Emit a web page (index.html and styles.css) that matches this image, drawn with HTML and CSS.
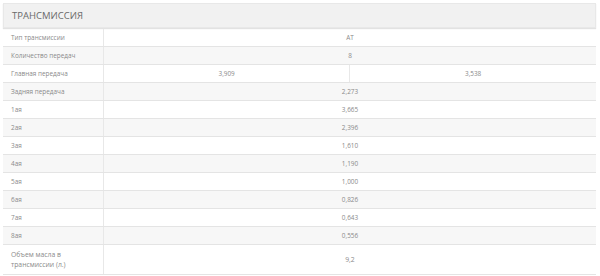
FILE: index.html
```html
<!DOCTYPE html>
<html lang="ru">
<head>
<meta charset="utf-8">
<link rel="stylesheet" href="styles.css">
</head>
<body>
<div class="panel">
  <div class="head">ТРАНСМИССИЯ</div>
  <table class="spec">
    <tr><td class="k">Тип трансмиссии</td><td class="v" colspan="2">AT</td></tr>
    <tr><td class="k">Количество передач</td><td class="v" colspan="2">8</td></tr>
    <tr><td class="k">Главная передача</td><td class="v split">3,909</td><td class="v">3,538</td></tr>
    <tr><td class="k">Задняя передача</td><td class="v" colspan="2">2,273</td></tr>
    <tr><td class="k">1ая</td><td class="v" colspan="2">3,665</td></tr>
    <tr><td class="k">2ая</td><td class="v" colspan="2">2,396</td></tr>
    <tr><td class="k">3ая</td><td class="v" colspan="2">1,610</td></tr>
    <tr><td class="k">4ая</td><td class="v" colspan="2">1,190</td></tr>
    <tr><td class="k">5ая</td><td class="v" colspan="2">1,000</td></tr>
    <tr><td class="k">6ая</td><td class="v" colspan="2">0,826</td></tr>
    <tr><td class="k">7ая</td><td class="v" colspan="2">0,643</td></tr>
    <tr><td class="k">8ая</td><td class="v" colspan="2">0,556</td></tr>
    <tr class="tall"><td class="k">Объем масла в<br>трансмиссии (л.)</td><td class="v" colspan="2">9,2</td></tr>
  </table>
</div>
</body>
</html>
```
FILE: styles.css
```css
html, body { margin: 0; padding: 0; background: #fff; }
body { font-family: "Open Sans", "DejaVu Sans", sans-serif; color: #888; }
.panel { padding: 3px 4px 0 3px; }
.head {
  height: 23px;
  line-height: 23px;
  background: #f1f1f1;
  border: 1px solid #e8e8e8;
  box-shadow: 0 1px 1px #e2e2e2;
  padding-left: 8px;
  font-size: 9.5px;
  color: #6a6a6a;
}
.spec {
  width: 593px;
  border-collapse: collapse;
  margin-top: 1px;
  font-size: 6.4px;
  table-layout: fixed;
}
.spec td {
  height: 17px;
  padding: 0;
  border-bottom: 1px solid #e4e4e4;
  vertical-align: middle;
}
.spec tr:nth-child(even) td { background: #f7f7f7; }
.spec .k {
  width: 92px;
  padding-left: 8px;
  border-right: 1px solid #e8e8e8;
  color: #8a8a8a;
}
.spec .v { text-align: center; color: #8a8a8a; }
.spec .split { width: 247px; border-right: 1px solid #e8e8e8; }
.spec tr.tall td { height: 29px; line-height: 10px; font-size: 6.8px; }
```
